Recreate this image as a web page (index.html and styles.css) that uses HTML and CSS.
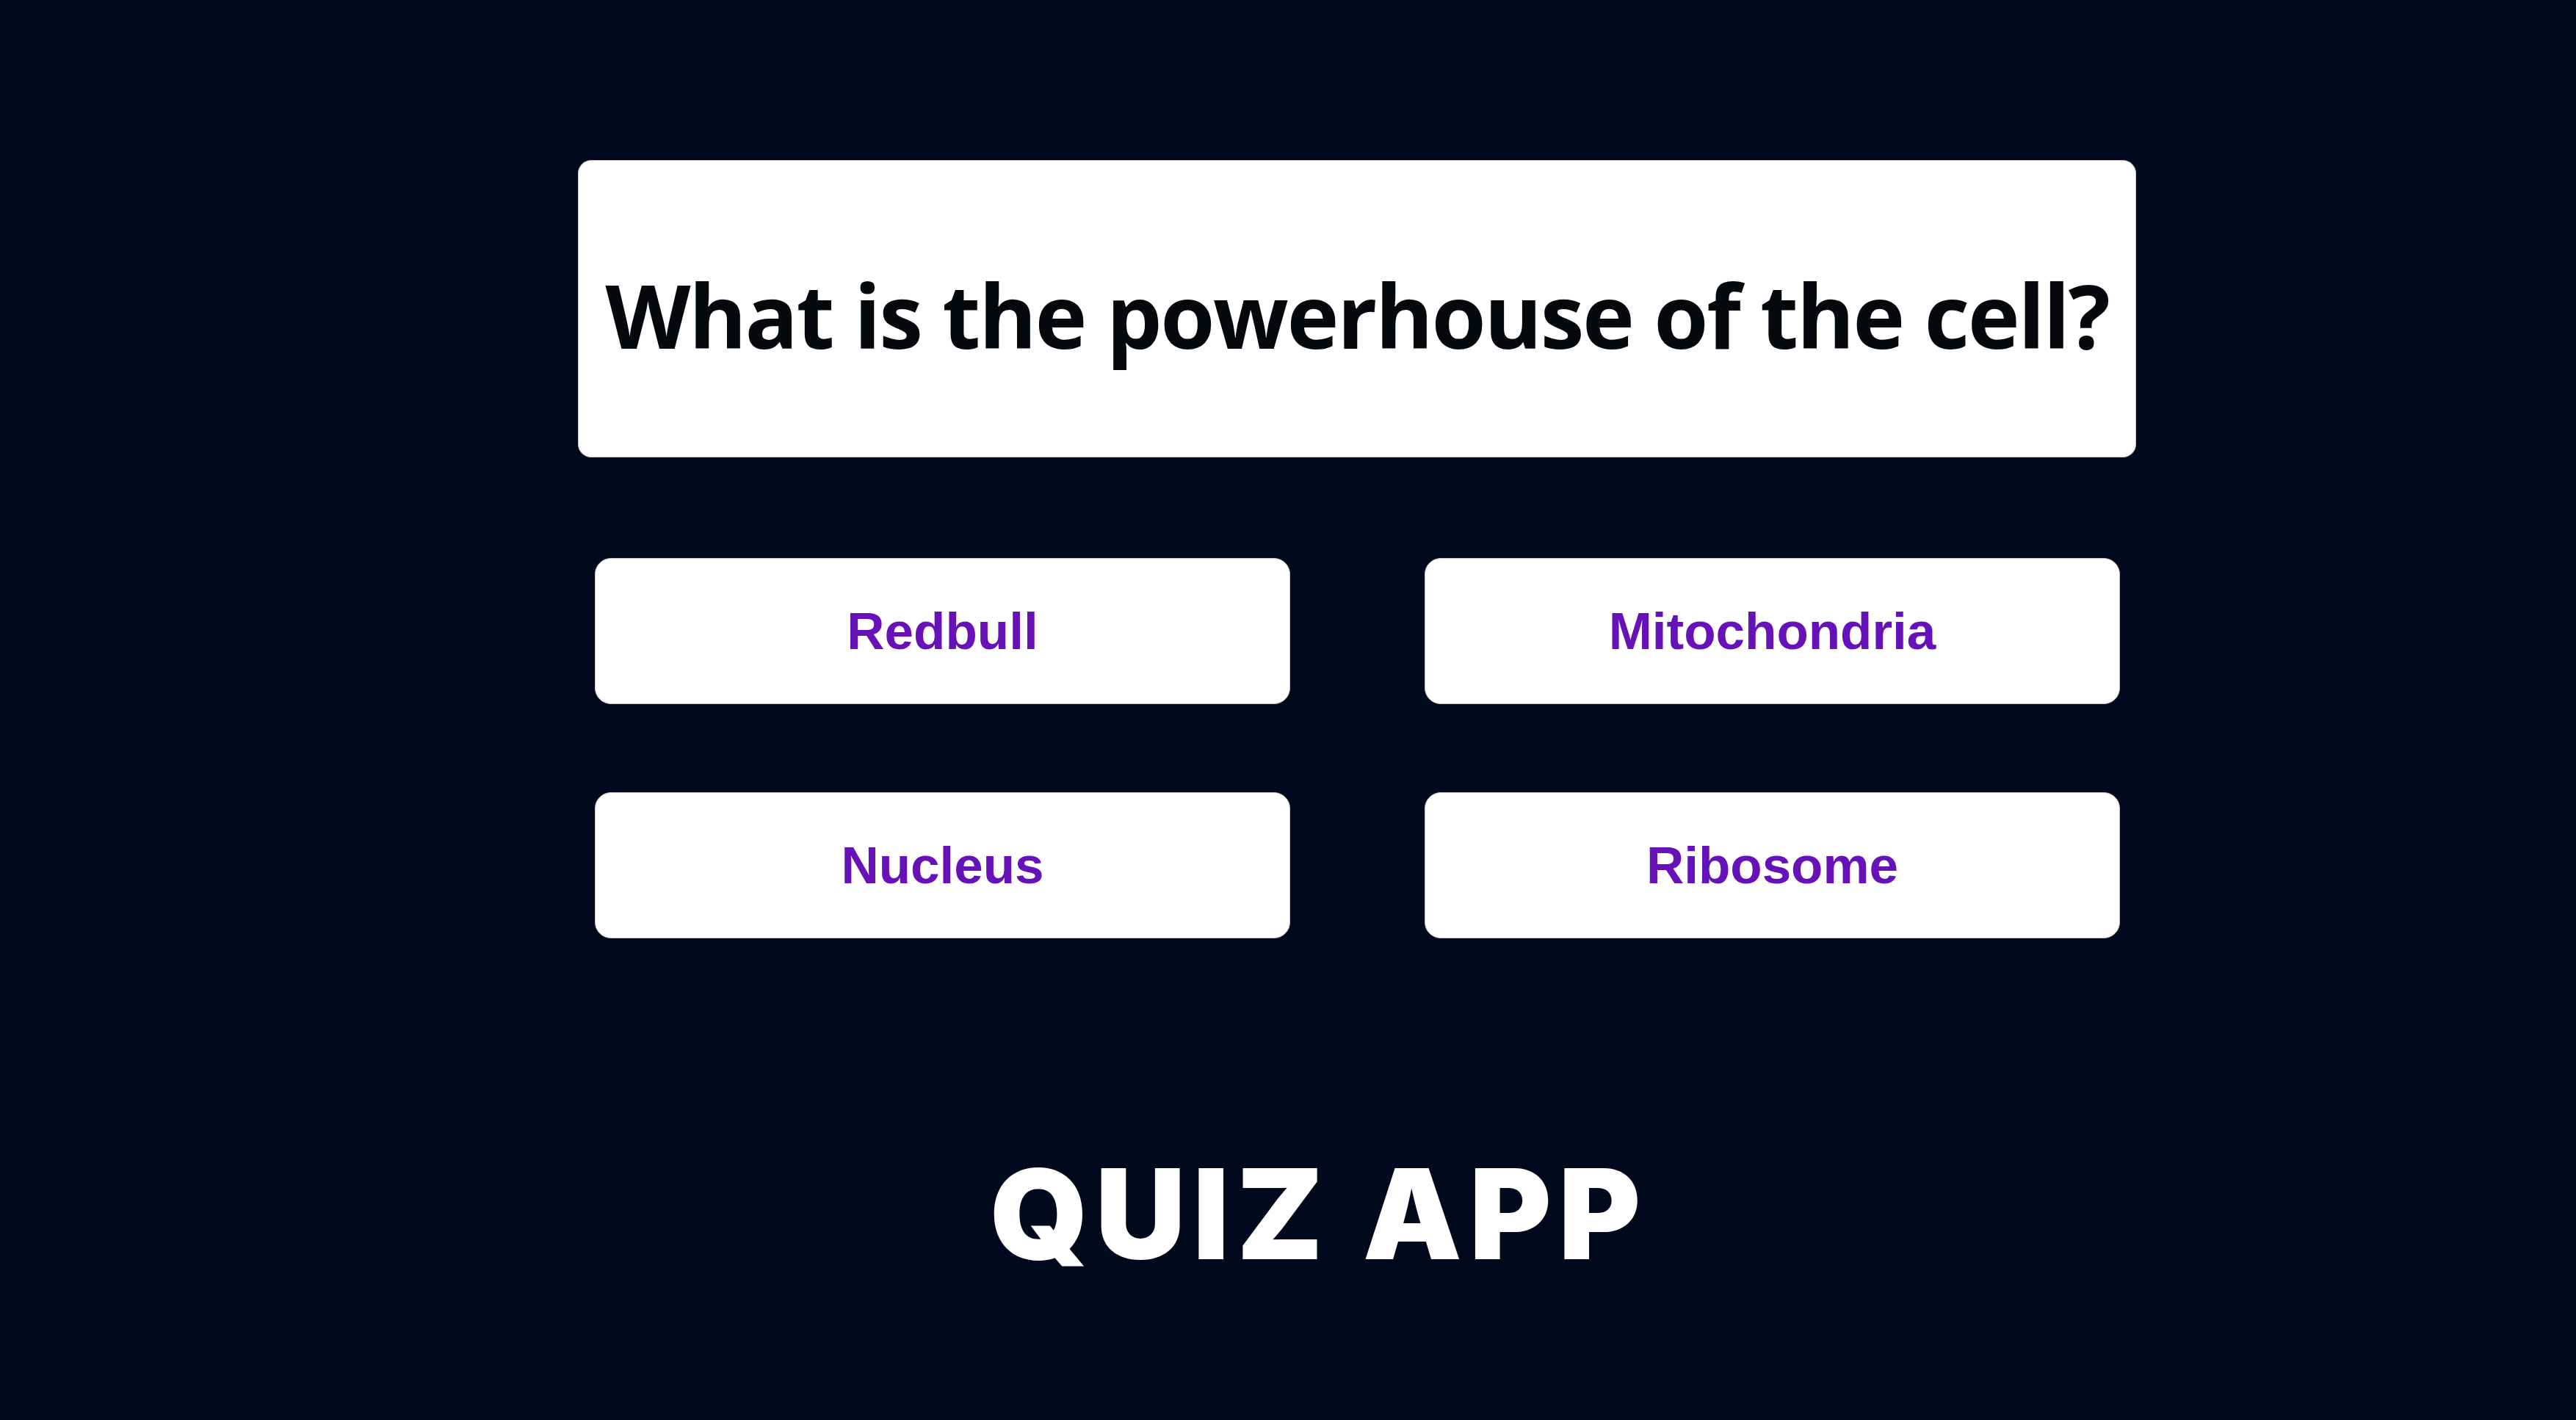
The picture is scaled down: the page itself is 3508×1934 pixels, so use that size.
FILE: index.html
```html
<!DOCTYPE html>
<html lang="en">
<head>
<meta charset="utf-8">
<title>Quiz App</title>
<link rel="stylesheet" href="styles.css">
</head>
<body>
<main class="quiz">
  <section class="question-card">
    <h2 class="question">What is the powerhouse of the cell?</h2>
  </section>
  <section class="answers">
    <button class="answer">Redbull</button>
    <button class="answer">Mitochondria</button>
    <button class="answer">Nucleus</button>
    <button class="answer">Ribosome</button>
  </section>
</main>
<footer class="brand">
  <h1 class="brand-title">QUIZ APP</h1>
</footer>
</body>
</html>
```

FILE: styles.css
```css
html, body {
  margin: 0;
  padding: 0;
}

body {
  background: #010a1d;
  width: 3508px;
  height: 1934px;
  overflow: hidden;
}

.quiz {
  width: 2122px;
  margin: 218px 0 0 787px;
}

.question-card {
  box-sizing: border-box;
  height: 405px;
  background: #ffffff;
  border: 1px solid #c9c9c9;
  border-radius: 18px;
  display: flex;
  align-items: center;
  justify-content: center;
  padding-top: 16px;
}

.question {
  margin: 0;
  font-family: "Open Sans", "Noto Sans", sans-serif;
  font-weight: 700;
  font-size: 120px;
  letter-spacing: -2.4px;
  line-height: 1;
  color: #05090d;
  white-space: nowrap;
}

.answers {
  display: grid;
  grid-template-columns: 947px 947px;
  column-gap: 183px;
  row-gap: 120px;
  margin-top: 137px;
  padding-left: 23px;
}

.answer {
  box-sizing: border-box;
  height: 199px;
  background: #ffffff;
  border: 1px solid #c9c9c9;
  border-radius: 22px;
  font-family: "Liberation Sans", Arial, sans-serif;
  font-weight: 700;
  font-size: 71px;
  color: #6612b8;
  padding: 0;
  cursor: pointer;
}

.brand {
  padding-left: 84px;
  text-align: center;
  margin-top: 290px;
}

.brand-title {
  margin: 0;
  font-family: "Inter", "Noto Sans", sans-serif;
  font-weight: 900;
  font-size: 170px;
  line-height: 1;
  color: #ffffff;
  letter-spacing: 10px;
}
```
